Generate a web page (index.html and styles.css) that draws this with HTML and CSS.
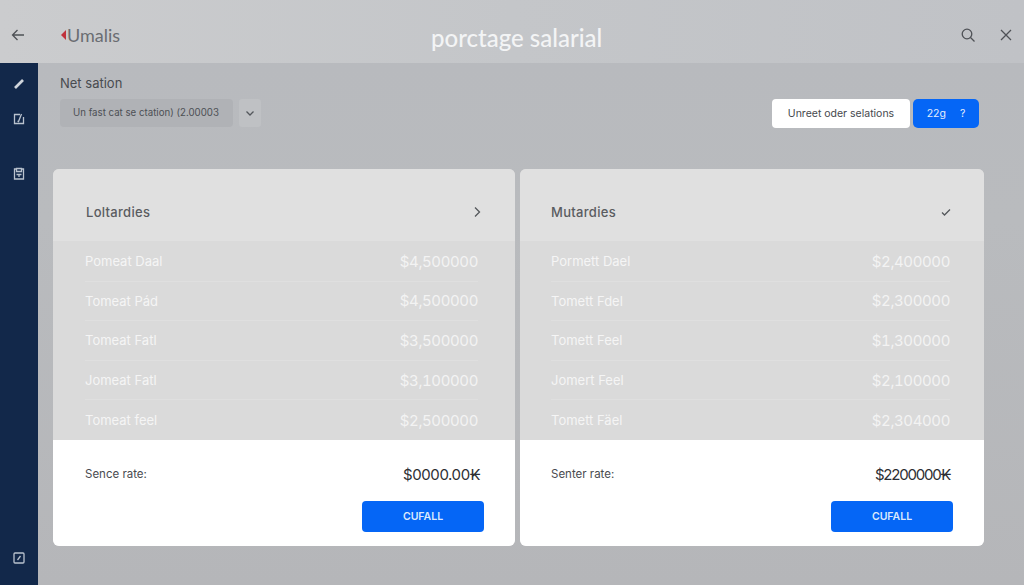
FILE: index.html
```html
<!DOCTYPE html>
<html lang="en">
<head>
  <meta charset="UTF-8">
  <meta name="viewport" content="width=device-width, initial-scale=1.0">
  <title>porctage salarial</title>
  <link rel="stylesheet" href="styles.css">
</head>
<body>

<!-- Top bar -->
<header class="topbar">
  <button class="icon-button back-button" aria-label="Back">
    <svg width="16" height="16" viewBox="0 0 16 16"><path d="M14 8H2.500M7.500 3 2.500 8l5 5"/></svg>
  </button>
  <div class="brand"><span class="brand-mark"></span><span>Umalis</span></div>
  <h1 class="page-title">porctage salarial</h1>
  <div class="topbar-actions">
    <button class="icon-button" aria-label="Search">
      <svg width="16" height="16" viewBox="0 0 16 16"><circle cx="7" cy="7" r="4.800"/><path d="m10.500 10.500 4 4"/></svg>
    </button>
    <button class="icon-button" aria-label="Close">
      <svg width="16" height="16" viewBox="0 0 16 16"><path d="m3 3 10 10M13 3 3 13"/></svg>
    </button>
  </div>
</header>

<div class="layout">
  <!-- Side rail -->
  <nav class="rail">
    <svg class="rail-pencil" width="14" height="14" viewBox="0 0 14 14"><path d="M3 11 11 3"/></svg>
    <svg class="rail-check" width="14" height="14" viewBox="0 0 14 14"><path d="M8 2.500H2.500v9h9V5M5.500 9 6.500 9.500 9.500 2"/></svg>
    <svg class="rail-clip" width="14" height="14" viewBox="0 0 14 14"><path d="M4.500 2H2.500v10h9V2h-2M4.500 1.500h5v3h-5zM4.500 7.500h5M7 7.500v2.500"/></svg>
    <svg class="rail-edit" width="14" height="14" viewBox="0 0 14 14"><rect x="2" y="2" width="10" height="10" rx="1"/><path d="m5.500 9 3-4"/></svg>
  </nav>

  <main class="content">
    <div class="toolbar">
      <div class="filter">
        <label class="filter-label">Net sation</label>
        <div class="filter-row">
          <div class="filter-select">Un fast cat se ctation) (2.00003</div>
          <button class="filter-toggle" aria-label="Open">
            <svg width="10" height="10" viewBox="0 0 10 10"><path d="m1.500 3.500 3.500 3.500 3.500-3.500"/></svg>
          </button>
        </div>
      </div>
      <div class="toolbar-actions">
        <button class="order-button">Unreet oder selations</button>
        <button class="count-button"><span>22g</span><span>?</span></button>
      </div>
    </div>

    <div class="cards">
      <section class="card card-left">
        <div class="card-head">
          <h2>Loltardies</h2>
          <svg class="head-icon" width="10" height="12" viewBox="0 0 10 12"><path d="m3 1.500 4.500 4.500-4.500 4.500"/></svg>
        </div>
        <ul class="card-rows">
          <li><span>Pomeat Daal</span><span class="amount">$4,500000</span></li>
          <li><span>Tomeat Pád</span><span class="amount">$4,500000</span></li>
          <li><span>Tomeat Fatl</span><span class="amount">$3,500000</span></li>
          <li><span>Jomeat Fatl</span><span class="amount">$3,100000</span></li>
          <li><span>Tomeat feel</span><span class="amount">$2,500000</span></li>
        </ul>
        <div class="card-foot">
          <div class="foot-line"><span class="foot-label">Sence rate:</span><span class="foot-total">$0000.00₭</span></div>
          <button class="foot-button">CUFALL</button>
        </div>
      </section>

      <section class="card card-right">
        <div class="card-head">
          <h2>Mutardies</h2>
          <svg class="head-icon" width="12" height="12" viewBox="0 0 12 12"><path d="m2 6.500 2.500 2.500 5.500-5.500"/></svg>
        </div>
        <ul class="card-rows">
          <li><span>Pormett Dael</span><span class="amount">$2,400000</span></li>
          <li><span>Tomett Fdel</span><span class="amount">$2,300000</span></li>
          <li><span>Tomett Feel</span><span class="amount">$1,300000</span></li>
          <li><span>Jomert Feel</span><span class="amount">$2,100000</span></li>
          <li><span>Tomett Fäel</span><span class="amount">$2,304000</span></li>
        </ul>
        <div class="card-foot">
          <div class="foot-line"><span class="foot-label">Senter rate:</span><span class="foot-total">$2200000₭</span></div>
          <button class="foot-button">CUFALL</button>
        </div>
      </section>
    </div>
  </main>
</div>

</body>
</html>
```

FILE: styles.css
```css
* {
  box-sizing: border-box;
}

body {
  margin: 0;
  height: 585px;
  overflow: hidden;
  font-family: "Inter", "Liberation Sans", sans-serif;
  background-color: #b5b7bb;
  color: #4a4d52;
}

button {
  font-family: inherit;
  border: none;
  padding: 0;
  cursor: pointer;
}

svg {
  fill: none;
  stroke: currentColor;
  stroke-width: 1.300;
  display: block;
}

/* Top bar */
.topbar {
  height: 63px;
  display: flex;
  align-items: center;
  padding: 7px 10px 0;
  background: linear-gradient(90deg, #cbccce 0%, #c4c6c9 50%, #c0c2c6 100%);
  position: relative;
}

.icon-button {
  background: none;
  color: #4e5156;
  width: 16px;
  height: 16px;
}

.brand {
  margin-left: 35px;
  display: flex;
  align-items: center;
  font-family: "Lato", sans-serif;
  font-size: 18px;
  color: #6a6d72;
}

.brand-mark {
  width: 0;
  height: 0;
  border-top: 5px solid transparent;
  border-bottom: 5px solid transparent;
  border-right: 5px solid #c0323c;
  margin-right: 1px;
}

.page-title {
  position: absolute;
  left: 431px;
  top: 23px;
  margin: 0;
  font-family: "Lato", sans-serif;
  font-size: 24px;
  line-height: 29px;
  font-weight: 500;
  color: #f3f4f5;
}

.topbar-actions {
  margin-left: auto;
  display: flex;
  gap: 22px;
}

/* Rail and content */
.layout {
  display: flex;
  height: 522px;
}

.rail {
  width: 38px;
  background-color: #12284a;
  color: #b9c2ce;
  display: flex;
  flex-direction: column;
  align-items: center;
  padding-top: 14px;
}

.rail-pencil {
  stroke-width: 2.600;
  color: #cfd5dc;
}

.rail-check {
  margin-top: 21px;
}

.rail-clip {
  margin-top: 41px;
}

.rail-edit {
  margin-top: auto;
  margin-bottom: 20px;
}

.content {
  flex: 1;
  padding-left: 15px;
  background: linear-gradient(180deg, #b8babe 0%, #b9bbbe 30%, #b5b6b9 100%);
}

/* Toolbar */
.toolbar {
  height: 106px;
  display: flex;
  justify-content: space-between;
  padding: 12px 45px 0 7px;
}

.filter-label {
  display: block;
  font-size: 13px;
  line-height: 16px;
  color: #484b50;
}

.filter-row {
  display: flex;
  gap: 6px;
  margin-top: 8px;
}

.filter-select {
  width: 173px;
  height: 28px;
  padding-left: 13px;
  border-radius: 4px;
  background-color: #b0b2b6;
  font-size: 9.700px;
  line-height: 28px;
  color: #4d5055;
  white-space: nowrap;
}

.filter-toggle {
  width: 22px;
  height: 28px;
  border-radius: 3px;
  background-color: #bfc1c4;
  color: #54575c;
  display: flex;
  align-items: center;
  justify-content: center;
}

.toolbar-actions {
  display: flex;
  gap: 3px;
  padding-top: 24px;
}

.order-button {
  width: 138px;
  height: 29px;
  border-radius: 4px;
  background-color: #fff;
  font-size: 10.500px;
  color: #45484d;
}

.count-button {
  width: 66px;
  height: 29px;
  border-radius: 5px;
  background-color: #0566f6;
  color: #e4eefc;
  font-size: 10.500px;
  display: flex;
  align-items: center;
  justify-content: center;
  gap: 14px;
}

/* Cards */
.cards {
  display: flex;
  gap: 5px;
}

.card {
  height: 377px;
  border-radius: 6px;
  overflow: hidden;
  display: flex;
  flex-direction: column;
  background-color: #dadada;
}

.card-left {
  width: 462px;
  --pad-left: 32px;
  --pad-right: 37px;
}

.card-right {
  width: 464px;
  --pad-left: 31px;
  --pad-right: 34px;
}

.card-head {
  height: 72px;
  display: flex;
  align-items: center;
  justify-content: space-between;
  padding: 14px 33px 0 33px;
  background-color: #e0e0e0;
  color: #55585c;
}

.card-right .card-head {
  padding-left: 31px;
  padding-right: 32px;
}

.card-head h2 {
  margin: 0;
  font-size: 13px;
  font-weight: 500;
  letter-spacing: 0.3px;
  color: #5a5c60;
}

.card-rows {
  list-style: none;
  margin: 0;
  padding: 1px var(--pad-right) 0 var(--pad-left);
  height: 199px;
  color: #f5f5f5;
}

.card-rows li {
  height: 39.600px;
  display: flex;
  align-items: center;
  justify-content: space-between;
  border-bottom: 1px solid #dfdfdf;
  font-size: 13px;
}

.card-rows li:last-child {
  border-bottom: none;
}

.amount {
  font-size: 15px;
  font-variant-numeric: tabular-nums;
  letter-spacing: -0.400px;
  color: #f3f3f3;
}

.card-foot {
  flex: 1;
  background-color: #fff;
  padding: 0 var(--pad-right) 0 var(--pad-left);
  display: flex;
  flex-direction: column;
}

.foot-line {
  display: flex;
  justify-content: space-between;
  align-items: center;
  height: 26px;
  margin-top: 21px;
}

.foot-label {
  font-size: 11.500px;
  color: #4a4c50;
}

.foot-total {
  font-size: 15px;
  color: #2d2f33;
}

.card-left .foot-total {
  margin-right: -2px;
  letter-spacing: -0.400px;
}

.card-right .foot-total {
  letter-spacing: -1.200px;
}

.foot-button {
  width: 122px;
  height: 31px;
  margin-top: 14px;
  margin-left: auto;
  margin-right: -6px;
  border-radius: 4px;
  background-color: #0566f6;
  color: #dbe9fd;
  font-size: 10.500px;
  font-weight: 600;
}

.card-right .foot-button {
  margin-right: -3px;
}
```
